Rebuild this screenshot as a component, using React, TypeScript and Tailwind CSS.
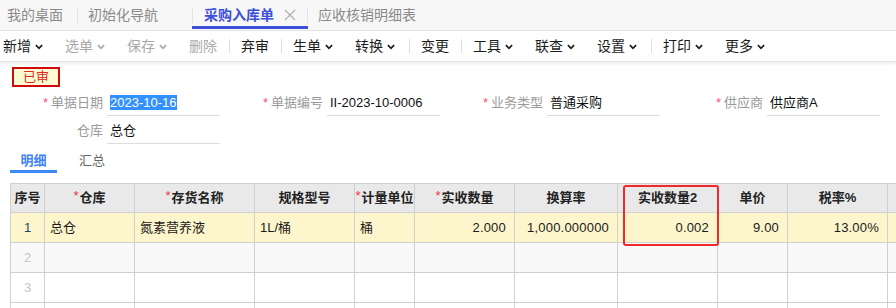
import React from "react";

type TB = { t: string; chev?: boolean; dis?: boolean } | "sep";

const toolbar: TB[] = [
  { t: "新增", chev: true },
  { t: "选单", chev: true, dis: true },
  { t: "保存", chev: true, dis: true },
  { t: "删除", dis: true },
  "sep",
  { t: "弃审" },
  "sep",
  { t: "生单", chev: true },
  { t: "转换", chev: true },
  "sep",
  { t: "变更" },
  "sep",
  { t: "工具", chev: true },
  { t: "联查", chev: true },
  { t: "设置", chev: true },
  "sep",
  { t: "打印", chev: true },
  { t: "更多", chev: true },
];

const Chev = () => (
  <svg width="8" height="6" viewBox="0 0 8 6" className="ml-[4px] mr-[2px] mt-[1px]">
    <path d="M0.9 1.1 L4 4.3 L7.1 1.1" fill="none" stroke="currentColor" strokeWidth="1.7" />
  </svg>
);

const cols = [34, 90, 120, 100, 60, 100, 103, 100, 70, 100, 100];
const widthCls = [
  "w-[34px]",
  "w-[90px]",
  "w-[120px]",
  "w-[100px]",
  "w-[60px]",
  "w-[100px]",
  "w-[103px]",
  "w-[100px]",
  "w-[70px]",
  "w-[100px]",
  "w-[100px]",
];
const headers: { t: string; req?: boolean }[] = [
  { t: "序号" },
  { t: "仓库", req: true },
  { t: "存货名称", req: true },
  { t: "规格型号" },
  { t: "计量单位", req: true },
  { t: "实收数量", req: true },
  { t: "换算率" },
  { t: "实收数量2" },
  { t: "单价" },
  { t: "税率%" },
  { t: "" },
];
const row1 = ["1", "总仓", "氮素营养液", "1L/桶", "桶", "2.000", "1,000.000000", "0.002", "9.00", "13.00%", ""];
const align = ["c", "l", "l", "l", "l", "r", "r", "r", "r", "r", "r"];

function Field({ label, req, value, sel }: { label: string; req?: boolean; value: string; sel?: boolean }) {
  return (
    <div className="flex w-[220px] h-[26px]">
      <div className="w-[107px] pr-[4px] flex items-center justify-end text-[13px] text-[#9a9a9a]">
        {req && <span className="text-[#f4557a] mr-[3px] text-[13px]">*</span>}
        <span>{label}</span>
      </div>
      <div className="w-[113px] border-b border-[#dcdcdc] flex items-center pl-[3px] text-[13px] text-[#111]">
        {sel ? <span className="bg-[#3390ff] text-white leading-[15px]">{value}</span> : <span>{value}</span>}
      </div>
    </div>
  );
}

export default function App() {
  return (
    <div className="w-[896px] h-[308px] overflow-hidden bg-white font-['Liberation_Sans','Noto_Sans_CJK_SC',sans-serif]">
      {/* Tab bar */}
      <div className="h-[31px] bg-[#f7f7f7] border-b border-[#e4e3ee] flex items-stretch text-[14px] text-[#8a8a8a]">
        <div className="pl-[7px] pr-[14px] flex items-center">我的桌面</div>
        <div className="flex items-center">
          <div className="w-px h-[15px] bg-[#e2e2e2]" />
        </div>
        <div className="pl-[10px] pr-[34px] flex items-center">初始化导航</div>
        <div className="relative w-[116px] flex items-center pl-[12px]">
          <div className="absolute left-0 top-[8px] w-px h-[15px] bg-[#e2e2e2]" />
          <div className="absolute right-0 top-[8px] w-px h-[15px] bg-[#e2e2e2]" />
          <span className="font-bold text-[#3b4fd8]">采购入库单</span>
          <svg width="12" height="12" viewBox="0 0 12 12" className="ml-[10px]">
            <path d="M1 1 L11 11 M11 1 L1 11" stroke="#b0b0b0" strokeWidth="1.2" />
          </svg>
          <div className="absolute left-0 right-0 bottom-[1px] h-[3px] bg-[#3d52dc]" />
        </div>
        <div className="pl-[10px] flex items-center">应收核销明细表</div>
      </div>

      {/* Toolbar */}
      <div className="h-[31px] border-b border-[#e3e3e3] shadow-[0_2px_3px_rgba(0,0,0,0.07)] flex items-center text-[14px] relative z-10 bg-white">
        {toolbar.map((it, i) => {
          const prevSep = i > 0 && toolbar[i - 1] === "sep";
          if (it === "sep") {
            return <div key={i} className="ml-[12px] w-px h-[14px] bg-[#dedede]" />;
          }
          const ml = i === 0 ? "ml-[3px]" : prevSep ? "ml-[11px]" : "ml-[20px]";
          return (
            <div
              key={i}
              className={`${ml} flex items-center ${it.dis ? "text-[#a9a9a9]" : "text-[#1c1c1c]"}`}
            >
              <span>{it.t}</span>
              {it.chev && <Chev />}
            </div>
          );
        })}
      </div>

      {/* Form */}
      <div className="pt-[5px]">
        <div className="ml-[12px] w-[48px] h-[20px] border-2 border-[#cf0a0a] bg-[#fffbd3] flex items-center justify-center text-[13px] text-[#e0281e]">
          已审
        </div>
        <div className="mt-[3px] flex">
          <Field label="单据日期" req value="2023-10-16" sel />
          <Field label="单据编号" req value="II-2023-10-0006" />
          <Field label="业务类型" req value="普通采购" />
          <Field label="供应商" req value="供应商A" />
        </div>
        <div className="mt-[2px] flex">
          <Field label="仓库" value="总仓" />
        </div>
        <div className="h-[30px] flex items-stretch text-[13px]">
          <div className="relative ml-[10px] w-[47px] flex items-center justify-center pt-[4px] font-bold text-[#3f83f5]">
            明细
            <div className="absolute left-0 right-0 bottom-[1px] h-[3px] bg-[#3d8af7]" />
          </div>
          <div className="ml-[22px] flex items-center pt-[4px] text-[#666]">汇总</div>
        </div>
      </div>

      {/* Table */}
      <div className="relative mt-[9px] ml-[10px] w-[1100px] border-t border-l border-[#d0d0d0] text-[13px]">
        <div className="flex h-[29px] border-b border-[#d0d0d0] bg-[#e9e9e9] font-bold text-[#222]">
          {headers.map((h, i) => (
            <div
              key={i}
              className={`${widthCls[i]} shrink-0 border-r border-[#d0d0d0] flex items-center justify-center whitespace-nowrap overflow-hidden`}
            >
              {h.req && <span className="text-[#f0304a] font-normal mr-[1px] -mt-[4px]">*</span>}
              {h.t}
            </div>
          ))}
        </div>
        <div className="flex h-[30px] border-b border-[#d0d0d0] bg-[#fdf5cb] text-[#1c1c1c]">
          {row1.map((v, i) => (
            <div
              key={i}
              className={`${widthCls[i]} shrink-0 border-r border-[#d0d0d0] flex items-center whitespace-nowrap ${
                align[i] === "c"
                  ? "justify-center text-[#1e4468]"
                  : align[i] === "l"
                  ? "justify-start pl-[5px]"
                  : "justify-end pr-[8px] tracking-[0.2px]"
              }`}
            >
              {v}
            </div>
          ))}
        </div>
        {[2, 3, 4].map((n) => (
          <div
            key={n}
            className={`flex h-[30px] border-b border-[#d0d0d0] ${n === 2 ? "bg-[#f9f9f9]" : "bg-white"}`}
          >
            {cols.map((_, i) => (
              <div
                key={i}
                className={`${widthCls[i]} shrink-0 border-r border-[#d0d0d0] flex items-center justify-center text-[#c4c4c4]`}
              >
                {i === 0 && n < 4 ? n : ""}
              </div>
            ))}
          </div>
        ))}
        <div className="absolute left-[612px] top-[1px] w-[96px] h-[61px] border-2 border-[#f02a2a] rounded-[3px]" />
      </div>
    </div>
  );
}
